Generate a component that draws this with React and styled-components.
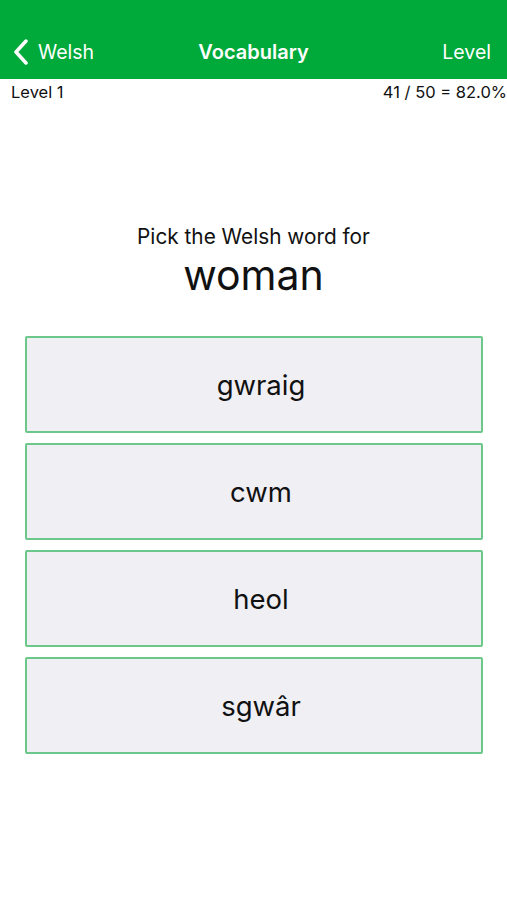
import React from "react";
import styled, { createGlobalStyle } from "styled-components";

const GlobalStyle = createGlobalStyle`
  html, body {
    margin: 0;
    padding: 0;
    background: #fff;
    font-family: Inter, "Liberation Sans", Arial, sans-serif;
  }
`;

const choices = ["gwraig", "cwm", "heol", "sgwâr"];

function App() {
  return (
    <Page>
      <GlobalStyle />
      <Header>
        <NavRow>
          <Back>
            <svg width="18" height="26" viewBox="0 0 18 26">
              <path
                d="M14 2 L4 13 L14 24"
                fill="none"
                stroke="#fff"
                strokeWidth="3.5"
                strokeLinecap="round"
                strokeLinejoin="round"
              />
            </svg>
            Welsh
          </Back>
          <Title>Vocabulary</Title>
          <NavRight>Level</NavRight>
        </NavRow>
      </Header>
      <StatusRow>
        <span>Level 1</span>
        <span>41 / 50 = 82.0%</span>
      </StatusRow>
      <Question>
        <Prompt>Pick the Welsh word for</Prompt>
        <Word>woman</Word>
      </Question>
      <Choices>
        {choices.map((c) => (
          <Choice key={c}>{c}</Choice>
        ))}
      </Choices>
    </Page>
  );
}

export default App;

const Page = styled.div`
  width: 507px;
  min-height: 900px;
  background: #fff;
`;
const Header = styled.div`
  background: #00aa3a;
  height: 79px;
  padding: 28px 16px 0 12px;
  box-sizing: border-box;
`;
const NavRow = styled.div`
  height: 48px;
  display: grid;
  grid-template-columns: 1fr auto 1fr;
  align-items: center;
  color: #fff;
  font-size: 19.5px;
`;
const Back = styled.div`
  display: flex;
  align-items: center;
  gap: 8px;
`;
const Title = styled.div`
  font-weight: 600;
  font-size: 20px;
  padding-left: 4px;
`;
const NavRight = styled.div`
  text-align: right;
`;
const StatusRow = styled.div`
  display: flex;
  justify-content: space-between;
  padding: 1px 0 0 11px;
  height: 24px;
  line-height: 24px;
  font-size: 16.5px;
  color: #111;
`;
const Question = styled.div`
  display: flex;
  flex-direction: column;
  align-items: center;
  padding-top: 121px;
  color: #111;
`;
const Prompt = styled.div`
  font-size: 20.8px;
  line-height: 24px;
`;
const Word = styled.div`
  font-size: 41px;
  line-height: 44px;
  margin-top: 4px;
`;
const Choices = styled.div`
  display: flex;
  flex-direction: column;
  gap: 10px;
  margin: 39px 24px 0 25px;
`;
const Choice = styled.div`
  height: 97px;
  box-sizing: border-box;
  border: 2px solid #6cc88a;
  border-radius: 2px;
  background: #efeff4;
  display: flex;
  align-items: center;
  justify-content: center;
  padding-left: 14px;
  font-size: 27.5px;
  color: #111;
`;
